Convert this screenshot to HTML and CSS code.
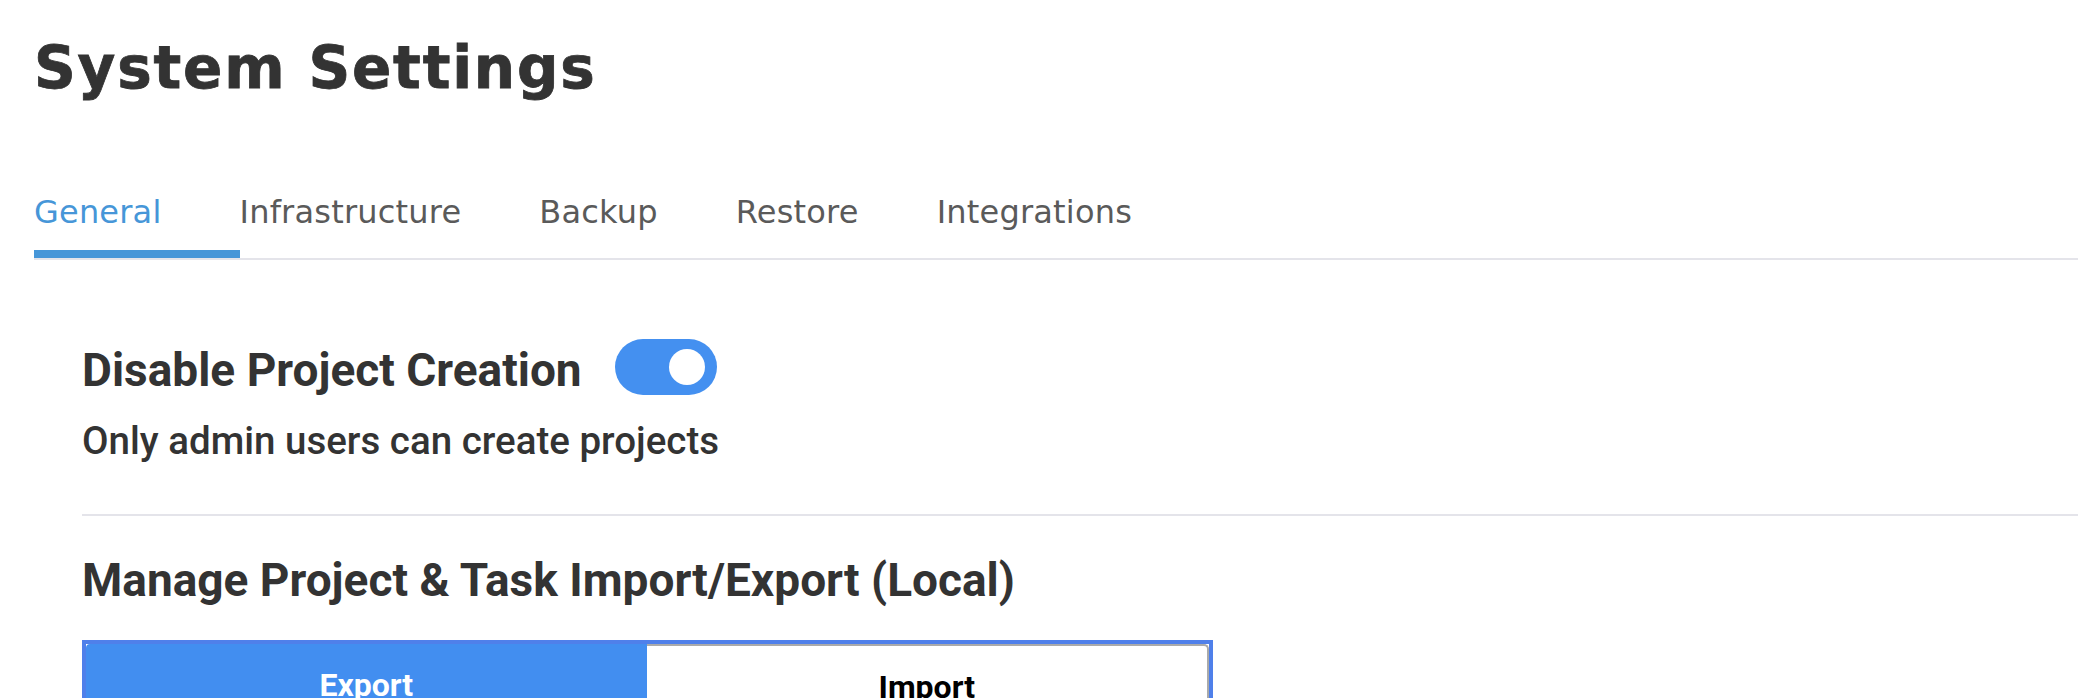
FILE: index.html
```html
<!DOCTYPE html>
<html lang="en">
<head>
<meta charset="utf-8">
<title>System Settings</title>
<link rel="stylesheet" href="styles.css">
</head>
<body>
<div class="page">
  <h1 class="page-title">System Settings</h1>
  <nav class="tabs">
    <a class="tab tab-active">General</a>
    <a class="tab">Infrastructure</a>
    <a class="tab">Backup</a>
    <a class="tab">Restore</a>
    <a class="tab">Integrations</a>
  </nav>
  <section class="content">
    <div class="setting-row">
      <h2 class="setting-title">Disable Project Creation</h2>
      <span class="toggle"><span class="knob"></span></span>
    </div>
    <p class="setting-desc">Only admin users can create projects</p>
    <hr class="divider">
    <h2 class="section-title">Manage Project &amp; Task Import/Export (Local)</h2>
    <div class="segmented">
      <button class="seg seg-active">Export</button>
      <button class="seg">Import</button>
    </div>
  </section>
</div>
</body>
</html>
```
FILE: styles.css
```css
html, body {
  margin: 0;
  padding: 0;
  background: #ffffff;
}
.page {
  padding: 33px 0 0 34px;
  font-family: Roboto, "Liberation Sans", sans-serif;
  color: #333333;
}
.page-title {
  margin: 0;
  font-family: "DejaVu Sans", sans-serif;
  font-weight: 700;
  font-size: 58px;
  line-height: 70px;
  letter-spacing: 1.8px;
  -webkit-text-stroke: 0.8px #333333;
  color: #333333;
}
.tabs {
  display: flex;
  margin-top: 89px;
  border-bottom: 2px solid #e4e4ea;
}
.tab {
  font-family: "DejaVu Sans", sans-serif;
  font-size: 32px;
  line-height: 40px;
  letter-spacing: 0.2px;
  color: #5a5a5a;
  padding: 0 78px 18px 0;
  border-bottom: 8px solid transparent;
}
.tab-active {
  color: #4696d8;
  border-bottom-color: #4696d8;
}
.content {
  padding: 79px 0 0 48px;
}
.setting-row {
  display: flex;
  align-items: flex-start;
  gap: 33px;
}
.setting-title, .section-title {
  margin: 0;
  font-weight: 700;
  font-size: 46px;
  line-height: 56px;
  color: #333333;
}
.setting-title {
  padding-top: 3px;
}
.toggle {
  display: flex;
  align-items: center;
  justify-content: flex-end;
  width: 102px;
  height: 56px;
  padding: 0 12px;
  box-sizing: border-box;
  border-radius: 28px;
  background: #4490f0;
}
.knob {
  width: 36px;
  height: 36px;
  border-radius: 50%;
  background: #ffffff;
}
.setting-desc {
  margin: 20px 0 0 0;
  font-weight: 500;
  font-size: 38.5px;
  line-height: 46px;
  color: #333333;
}
.divider {
  margin: 50px 0 0 0;
  border: 0;
  height: 2px;
  background: #e4e4ea;
}
.section-title {
  margin-top: 36px;
}
.segmented {
  display: flex;
  width: 1131px;
  box-sizing: border-box;
  margin-top: 32px;
  border: 4px solid #4f80ea;
}
.seg {
  flex: 1;
  height: 90px;
  padding: 21px 0 0 0;
  display: flex;
  justify-content: center;
  align-items: flex-start;
  font-family: Roboto, "Liberation Sans", sans-serif;
  font-weight: 700;
  font-size: 32px;
  line-height: 40px;
  color: #000000;
  background: #ffffff;
  border: 2px solid #aaaaaa;
  border-left: 0;
  border-bottom: 0;
  border-radius: 0 5px 0 0;
}
.seg-active {
  color: #ffffff;
  background: #428ef0;
  border: 0;
  border-radius: 4px 0 0 0;
}
```
